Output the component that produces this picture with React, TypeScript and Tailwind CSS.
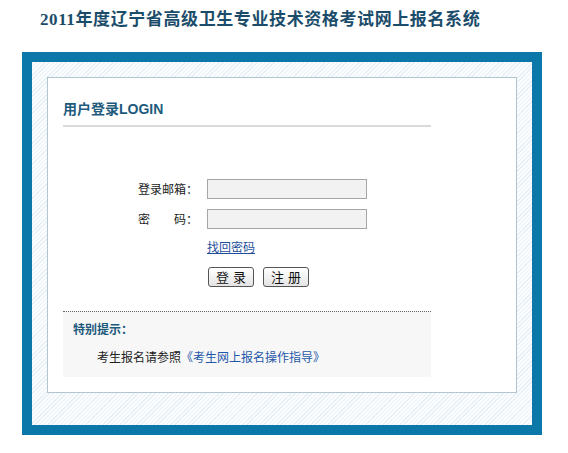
import React from 'react';

const cjk = 'font-["SimSun","Noto_Sans_CJK_SC",sans-serif]';

const App: React.FC = () => {
  return (
    <div className={`w-[568px] h-[453px] bg-white ${cjk} text-[12px] text-[#222]`}>
      {/* Title */}
      <div className='h-[40px] pl-[40px] flex items-center font-["Liberation_Serif","Noto_Sans_CJK_SC",serif] font-bold text-[17px] text-[#1b4d6b] tracking-[0.6px]'>
        2011年度辽宁省高级卫生专业技术资格考试网上报名系统
      </div>

      {/* Outer frame */}
      <div className="mt-[12px] ml-[22px] w-[520px] h-[383px] border-[10px] border-[#0b78a9] px-[15px] pt-[15px] pb-[32px] bg-[repeating-linear-gradient(135deg,#e6f0f6_0px,#e6f0f6_1px,#fafcfe_1px,#fafcfe_3px)]">
        <div className="w-[470px] h-[316px] border border-[#b3c5cf] bg-white pl-[15px]">
          {/* Heading */}
          <div className='pt-[22px] text-[14px] leading-[18px] font-bold text-[#1d5a7c] font-["Liberation_Sans","Noto_Sans_CJK_SC",sans-serif]'>
            用户登录LOGIN
          </div>
          <div className="mt-[7px] w-[368px] h-[2px] bg-[#d9d9d9]" />

          {/* Form */}
          <div className="mt-[52px] flex flex-col">
            <div className="flex items-center">
              <label className="w-[135px] text-right leading-[20px]">登录邮箱：</label>
              <input className="ml-[9px] w-[160px] h-[20px] border border-[#a6a6a6] bg-[#f2f2f2] outline-none" />
            </div>
            <div className="mt-[10px] flex items-center">
              <label className="w-[135px] text-right leading-[20px] whitespace-pre">密　　码：</label>
              <input type="password" className="ml-[9px] w-[160px] h-[20px] border border-[#a6a6a6] bg-[#f2f2f2] outline-none" />
            </div>
            <div className="mt-[10px] pl-[144px] leading-[16px]">
              <a href="#" className="text-[#1f4f9c] underline">找回密码</a>
            </div>
            <div className="mt-[12px] pl-[145px] flex gap-[9px]">
              <button className="w-[46px] h-[20px] rounded-[3px] border border-[#555] bg-gradient-to-b from-white to-[#e4e4e4] text-[13px] leading-[18px] text-[#111] tracking-[4px] pl-[4px]">
                登录
              </button>
              <button className="w-[46px] h-[20px] rounded-[3px] border border-[#555] bg-gradient-to-b from-white to-[#e4e4e4] text-[13px] leading-[18px] text-[#111] tracking-[4px] pl-[4px]">
                注册
              </button>
            </div>
          </div>

          {/* Tips */}
          <div className="mt-[24px] w-[368px] border-t border-dotted border-[#666] bg-[#f7f7f7] pt-[9px] pb-[12px]">
            <div className="pl-[10px] leading-[16px] font-bold text-[#1d5a7c]">特别提示：</div>
            <div className="mt-[12px] pl-[34px] leading-[16px]">
              考生报名请参照
              <a href="#" className="text-[#1f58a8]">《考生网上报名操作指导》</a>
            </div>
          </div>
        </div>
      </div>
    </div>
  );
};

export default App;
